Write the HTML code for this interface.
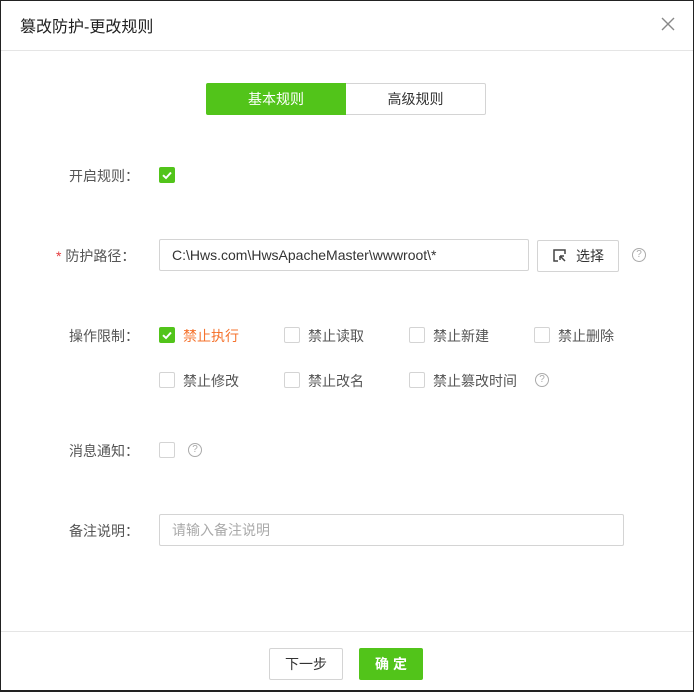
<!DOCTYPE html>
<html><head><meta charset="utf-8"><style>
*{margin:0;padding:0;box-sizing:border-box}
body{width:694px;height:692px;background:#fff;font-family:"Liberation Sans","Noto Sans CJK SC",sans-serif;font-size:14px;color:#333;position:relative;overflow:hidden}
.frame{position:absolute;left:0;top:0;width:694px;height:692px;border:1px solid #222;border-bottom-width:2px}
.a{position:absolute}
.cb{position:absolute;width:16px;height:16px;border:1px solid #d4d4d4;border-radius:2px;background:#fff}
.cb.on{background:#52c41a;border-color:#52c41a}
.lbl{position:absolute;font-size:14px;color:#555;white-space:nowrap}
.q{position:absolute;width:14px;height:14px;border:1px solid #aaa;border-radius:50%;font-size:10px;color:#aaa;text-align:center;line-height:12px}
</style></head><body>
<div class="frame"></div>
<div class="a" style="left:20px;top:13px;font-size:16px;color:#222">篡改防护-更改规则</div>
<svg class="a" style="left:661px;top:17px" width="14" height="14" viewBox="0 0 14 14"><path d="M1 1L13 13M13 1L1 13" stroke="#888" stroke-width="1.4"/></svg>
<div class="a" style="left:1px;top:50px;width:692px;height:1px;background:#e5e5e5"></div>

<div class="a" style="left:206px;top:83px;width:140px;height:32px;background:#52c41a;border-radius:2px 0 0 2px;color:#fff;text-align:center;line-height:32px">基本规则</div>
<div class="a" style="left:346px;top:83px;width:140px;height:32px;border:1px solid #d4d4d4;border-left:none;border-radius:0 2px 2px 0;color:#333;text-align:center;line-height:30px">高级规则</div>

<div class="lbl" style="left:69px;top:166px">开启规则：</div>
<div class="cb on" style="left:159px;top:167px"><svg width="14" height="14" viewBox="0 0 14 14"><path d="M3 7.2L6 10L11 4.5" stroke="#fff" stroke-width="2" fill="none"/></svg></div>

<div class="lbl" style="left:56px;top:246px"><span style="color:#e4393c">*</span> 防护路径：</div>
<div class="a" style="left:159px;top:239px;width:370px;height:32px;border:1px solid #d4d4d4;border-radius:2px;line-height:30px;padding-left:12px;color:#333">C:\Hws.com\HwsApacheMaster\wwwroot\*</div>
<div class="a" style="left:537px;top:240px;width:82px;height:32px;border:1px solid #d4d4d4;border-radius:2px;line-height:30px;color:#333;padding-left:38px">选择</div>
<svg class="a" style="left:553px;top:249px" width="14" height="14" viewBox="0 0 14 14"><path d="M12 5V1H1V12H5" stroke="#444" stroke-width="1.5" fill="none"/><path d="M7 7L12 12M7 7V11M7 7H11" stroke="#444" stroke-width="1.5" fill="none"/></svg>
<div class="q" style="left:632px;top:248px">?</div>

<div class="lbl" style="left:69px;top:326px">操作限制：</div>
<div class="cb on" style="left:159px;top:327px"><svg width="14" height="14" viewBox="0 0 14 14"><path d="M3 7.2L6 10L11 4.5" stroke="#fff" stroke-width="2" fill="none"/></svg></div>
<div class="lbl" style="left:183px;top:326px;color:#f5732e">禁止执行</div>
<div class="cb" style="left:284px;top:327px"></div><div class="lbl" style="left:308px;top:326px">禁止读取</div>
<div class="cb" style="left:409px;top:327px"></div><div class="lbl" style="left:433px;top:326px">禁止新建</div>
<div class="cb" style="left:534px;top:327px"></div><div class="lbl" style="left:558px;top:326px">禁止删除</div>

<div class="cb" style="left:159px;top:372px"></div><div class="lbl" style="left:183px;top:371px">禁止修改</div>
<div class="cb" style="left:284px;top:372px"></div><div class="lbl" style="left:308px;top:371px">禁止改名</div>
<div class="cb" style="left:409px;top:372px"></div><div class="lbl" style="left:433px;top:371px">禁止篡改时间</div>
<div class="q" style="left:535px;top:373px">?</div>

<div class="lbl" style="left:69px;top:441px">消息通知：</div>
<div class="cb" style="left:159px;top:442px"></div>
<div class="q" style="left:188px;top:443px">?</div>

<div class="lbl" style="left:69px;top:521px">备注说明：</div>
<div class="a" style="left:159px;top:514px;width:465px;height:32px;border:1px solid #d4d4d4;border-radius:2px;line-height:30px;padding-left:12px;color:#aaa">请输入备注说明</div>

<div class="a" style="left:1px;top:631px;width:692px;height:1px;background:#e5e5e5"></div>
<div class="a" style="left:269px;top:648px;width:74px;height:32px;border:1px solid #d4d4d4;border-radius:2px;text-align:center;line-height:30px;color:#333">下一步</div>
<div class="a" style="left:359px;top:648px;width:64px;height:32px;background:#52c41a;border-radius:2px;text-align:center;line-height:32px;color:#fff;font-weight:bold;letter-spacing:4px;padding-left:4px">确定</div>
</body></html>
